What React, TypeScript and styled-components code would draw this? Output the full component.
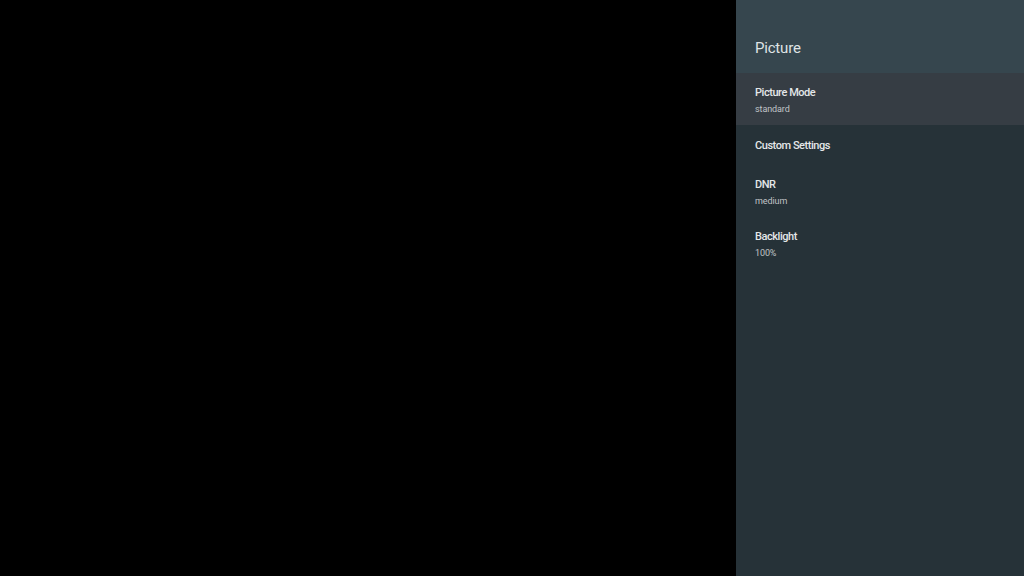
import React from 'react';
import styled, { createGlobalStyle } from 'styled-components';

const GlobalStyle = createGlobalStyle`
    html, body {
        margin: 0;
        padding: 0;
        background: #000;
        font-family: Roboto, 'Noto Sans', sans-serif;
    }
`;

const Screen = styled.div`
    display: flex;
    width: 1024px;
    height: 576px;
    background: #000;
    overflow: hidden;
`;

const Stage = styled.div`
    flex: 1;
`;

const Panel = styled.aside`
    width: 288px;
    display: flex;
    flex-direction: column;
    background: #263238;
`;

const Header = styled.div`
    height: 73px;
    display: flex;
    align-items: flex-end;
    padding: 0 19px 15px;
    box-sizing: border-box;
    background: #36464e;
`;

const HeaderTitle = styled.h1`
    margin: 0;
    font-size: 15px;
    font-weight: 400;
    line-height: 20px;
    letter-spacing: -0.2px;
    color: #dfe3e5;
`;

const List = styled.div`
    display: flex;
    flex-direction: column;
`;

const Row = styled.div<{ selected?: boolean; single?: boolean }>`
    height: ${(props) => (props.single ? '40px' : '52px')};
    display: flex;
    flex-direction: column;
    justify-content: center;
    padding: 2px 19px 0;
    box-sizing: border-box;
    background: ${(props) => (props.selected ? '#363d44' : 'transparent')};
`;

const RowTitle = styled.div`
    font-size: 11px;
    font-weight: 500;
    line-height: 14px;
    letter-spacing: -0.45px;
    color: #e4e7e9;
`;

const RowValue = styled.div`
    margin-top: 4px;
    font-size: 9px;
    line-height: 11px;
    letter-spacing: -0.1px;
    color: #c0c4c7;
`;

interface Item {
    title: string;
    value?: string;
    selected?: boolean;
}

const items: Item[] = [
    { title: 'Picture Mode', value: 'standard', selected: true },
    { title: 'Custom Settings' },
    { title: 'DNR', value: 'medium' },
    { title: 'Backlight', value: '100%' },
];

export default function App() {
    return (
        <>
            <GlobalStyle />
            <Screen>
                <Stage />
                <Panel>
                    <Header>
                        <HeaderTitle>Picture</HeaderTitle>
                    </Header>
                    <List>
                        {items.map((item) => (
                            <Row
                                key={item.title}
                                selected={item.selected}
                                single={!item.value}
                            >
                                <RowTitle>{item.title}</RowTitle>
                                {item.value && <RowValue>{item.value}</RowValue>}
                            </Row>
                        ))}
                    </List>
                </Panel>
            </Screen>
        </>
    );
}
